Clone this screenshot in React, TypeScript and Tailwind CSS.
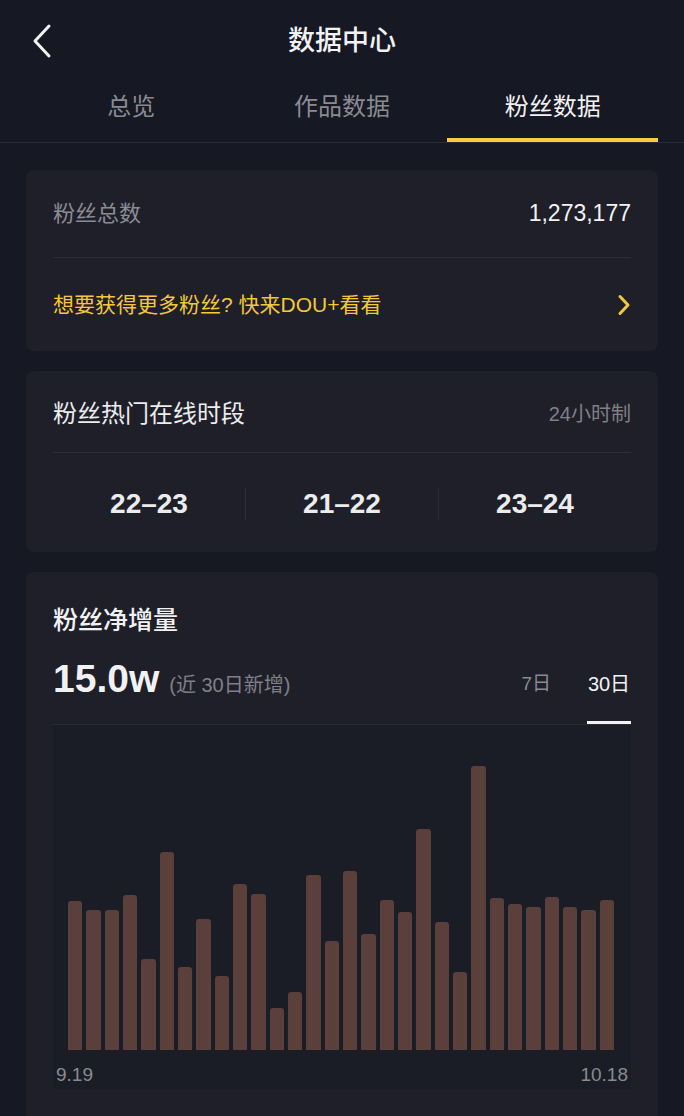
import React from "react";

const bars = [149, 140, 140, 155, 91, 198, 83, 131, 74, 166, 156, 42, 58, 175, 109, 179, 116, 150, 138, 221, 128, 78, 284, 152, 146, 143, 153, 143, 140, 150];

const font = { fontFamily: '"Liberation Sans", "Noto Sans CJK SC", sans-serif' };

export default function App() {
  return (
    <div className="min-h-[1116px] w-full bg-[#161823] text-[#ececee] overflow-hidden" style={font}>
      {/* header */}
      <div className="relative flex h-[82px] items-center justify-center">
        <button className="absolute left-[26px] top-[18px] flex h-[46px] w-[32px] items-center justify-center">
          <svg width="22" height="36" viewBox="0 0 22 36" fill="none">
            <path d="M18 3 L4 18 L18 33" stroke="#f2f2f4" strokeWidth="3" strokeLinecap="round" strokeLinejoin="round" />
          </svg>
        </button>
        <div className="text-[27px] font-medium leading-[34px] text-[#f2f2f4]">数据中心</div>
      </div>

      {/* tabs */}
      <div className="flex h-[61px] border-b border-[#282a34] px-[26px]">
        {[
          { t: "总览", a: false },
          { t: "作品数据", a: false },
          { t: "粉丝数据", a: true },
        ].map((tab) => (
          <div key={tab.t} className="flex flex-1 flex-col items-center">
            <div className={`pt-[10px] text-[24px] leading-[30px] ${tab.a ? "text-[#f2f2f4]" : "text-[#8a8b92]"}`}>{tab.t}</div>
            <div className={`mt-auto h-[4px] w-full ${tab.a ? "bg-[#f8cc45]" : "bg-transparent"}`} />
          </div>
        ))}
      </div>

      <div className="flex flex-col gap-[20px] px-[26px] pt-[27px]">
        {/* card 1 */}
        <div className="rounded-[8px] bg-[#1f1f29] px-[27px]">
          <div className="flex h-[88px] items-center justify-between border-b border-[#2c2d37]">
            <span className="text-[22px] text-[#8b8c93]">粉丝总数</span>
            <span className="text-[23px] text-[#f2f2f4]">1,273,177</span>
          </div>
          <div className="flex h-[93px] items-center justify-between">
            <span className="text-[21px] text-[#f3c83a]">想要获得更多粉丝?&nbsp;快来DOU+看看</span>
            <svg width="14" height="22" viewBox="0 0 14 22" fill="none">
              <path d="M3 2.5 L11 11 L3 19.5" stroke="#f3c83a" strokeWidth="3" strokeLinecap="round" strokeLinejoin="round" />
            </svg>
          </div>
        </div>

        {/* card 2 */}
        <div className="rounded-[8px] bg-[#1f1f29] px-[27px]">
          <div className="flex h-[82px] items-center justify-between border-b border-[#2c2d37] pt-[4px]">
            <span className="text-[24px] text-[#ececee]">粉丝热门在线时段</span>
            <span className="text-[20px] text-[#7f8087]">24小时制</span>
          </div>
          <div className="flex h-[99px] items-center pt-[2px]">
            {["22–23", "21–22", "23–24"].map((v, i) => (
              <React.Fragment key={v}>
                {i > 0 && <div className="h-[32px] w-px bg-[#2c2d37]" />}
                <div className="flex-1 text-center text-[28px] font-bold text-[#ececee]">{v}</div>
              </React.Fragment>
            ))}
          </div>
        </div>

        {/* card 3 */}
        <div className="rounded-[8px] bg-[#1f1f29] px-[27px] pb-[40px] pt-[34px]">
          <div className="text-[25px] font-medium leading-[28px] text-[#f2f2f4]">粉丝净增量</div>
          <div className="mt-[23px] flex h-[67px] justify-between">
            <div className="flex items-baseline gap-[10px] self-start">
              <span className="text-[39px] font-bold leading-[44px] text-[#f2f2f4]">15.0w</span>
              <span className="text-[20px] text-[#7f8087]">(近 30日新增)</span>
            </div>
            <div className="flex gap-[36px]">
              <div className="flex flex-col items-center">
                <span className="pt-[13px] text-[19px] leading-[28px] text-[#8a8b92]">7日</span>
              </div>
              <div className="flex flex-col items-center">
                <span className="pt-[13px] text-[20px] leading-[28px] text-[#f2f2f4]">30日</span>
                <div className="mt-auto h-[3px] w-[44px] bg-[#f2f2f4]" />
              </div>
            </div>
          </div>
          <div className="border-t border-[#2a2b35] bg-[#1a1c26]">
            <div className="flex h-[325px] items-end gap-[4px] pl-[15px] pr-[17px]">
              {bars.map((h, i) => (
                <div key={i} className="flex-1 rounded-t-[3px] bg-[#5a3f3b]" style={{ height: h }} />
              ))}
            </div>
            <div className="flex h-[39px] justify-between px-[3px] pt-[14px] text-[19px] leading-[22px] text-[#8a8b92]">
              <span>9.19</span>
              <span>10.18</span>
            </div>
          </div>
        </div>
      </div>
    </div>
  );
}
